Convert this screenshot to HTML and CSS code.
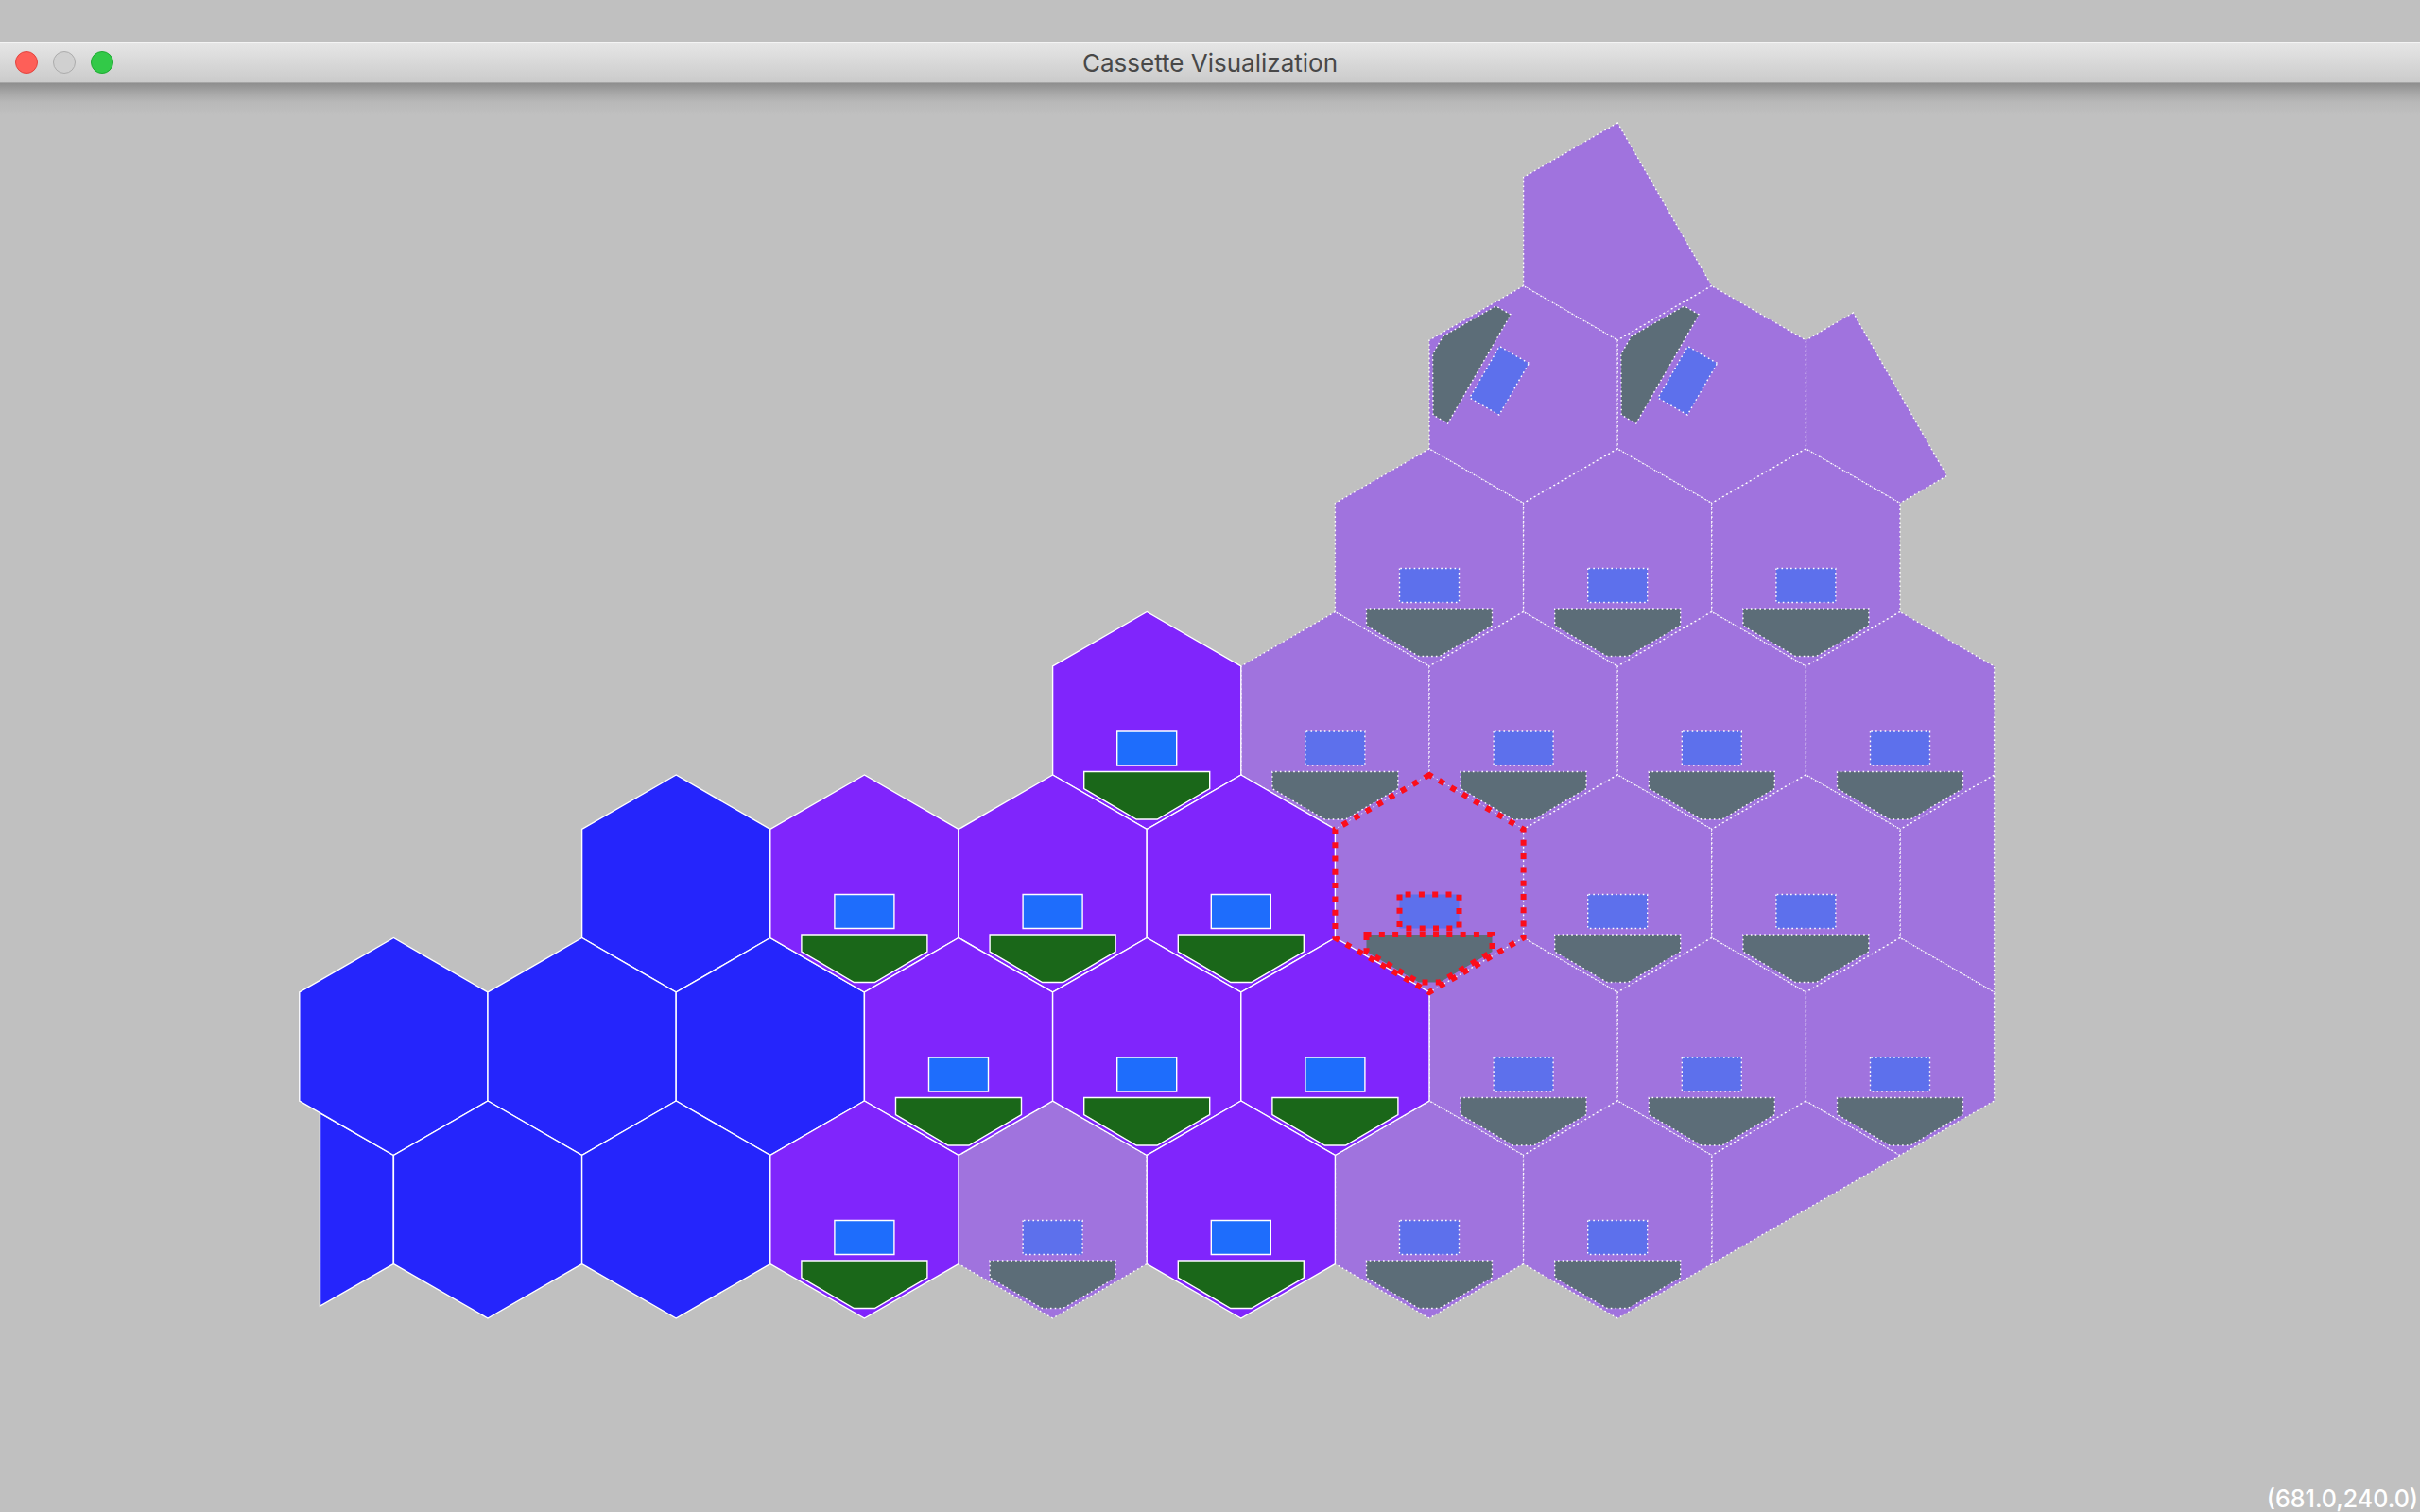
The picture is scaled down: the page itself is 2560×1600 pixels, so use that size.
FILE: index.html
```html
<!DOCTYPE html>
<html lang="en">
<head>
<meta charset="utf-8">
<title>Cassette Visualization</title>
<link rel="stylesheet" href="styles.css">
</head>
<body>
<header class="titlebar">
  <div class="controls">
    <button class="light light-close" type="button" aria-label="Close"></button>
    <button class="light light-minimize" type="button" aria-label="Minimize" disabled></button>
    <button class="light light-zoom" type="button" aria-label="Zoom"></button>
  </div>
  <h1 class="title">Cassette Visualization</h1>
</header>
<main class="stage">
  <svg class="grid" viewBox="0 88 2560 1512" role="img" aria-label="Cassette layout">
    <defs>
      <path id="hex" d="M0-115L-99.6-57.5V57.5L0 115L99.6 57.5V-57.5Z"/>
      <g id="parts">
        <path class="chip" d="M-31.5 11.5V47.5H31.5V11.5Z"/>
        <path class="tray" d="M-66.5 54V72L-11 104.500H11L66.5 72V54Z"/>
      </g>
      <g id="cell"><use href="#hex"/><use href="#parts"/></g>
    </defs>
    <g class="ghost">
      <path d="M1711.200 130L1611.600 187.500V302.500L1711.200 360L1810.800 302.500Z"/>
      <path d="M1960.500 331L1910.400 360V475L2010 532.500L2059.500 503.500Z"/>
      <path d="M2109.600 820L2010 877.500V992.500L2109.600 1050Z"/>
      <path d="M1910.400 1165L1810.800 1222.500V1337.500L2010 1222.500Z"/>
      <g transform="translate(1611.600 417.500)"><use href="#hex"/><use href="#parts" transform="rotate(120)"/></g>
      <g transform="translate(1810.800 417.500)"><use href="#hex"/><use href="#parts" transform="rotate(120)"/></g>
      <use href="#cell" x="1512" y="590"/>
      <use href="#cell" x="1711.200" y="590"/>
      <use href="#cell" x="1910.400" y="590"/>
      <use href="#cell" x="1412.400" y="762.500"/>
      <use href="#cell" x="1611.600" y="762.500"/>
      <use href="#cell" x="1810.800" y="762.500"/>
      <use href="#cell" x="2010" y="762.500"/>
      <use class="bare" href="#cell" x="1512" y="935"/>
      <use href="#cell" x="1711.200" y="935"/>
      <use href="#cell" x="1910.400" y="935"/>
      <use href="#cell" x="1611.600" y="1107.500"/>
      <use href="#cell" x="1810.800" y="1107.500"/>
      <use href="#cell" x="2010" y="1107.500"/>
      <use href="#cell" x="1113.600" y="1280"/>
      <use href="#cell" x="1512" y="1280"/>
      <use href="#cell" x="1711.200" y="1280"/>
    </g>
    <g class="plain">
      <path d="M338.500 1178V1382L416.200 1337.500V1222.500Z"/>
      <use href="#hex" x="715.200" y="935"/>
      <use href="#hex" x="416.400" y="1107.500"/>
      <use href="#hex" x="615.600" y="1107.500"/>
      <use href="#hex" x="814.800" y="1107.500"/>
      <use href="#hex" x="516" y="1280"/>
      <use href="#hex" x="715.200" y="1280"/>
    </g>
    <g class="placed">
      <use href="#cell" x="1213.200" y="762.500"/>
      <use href="#cell" x="914.400" y="935"/>
      <use href="#cell" x="1113.600" y="935"/>
      <use href="#cell" x="1312.800" y="935"/>
      <use href="#cell" x="1014" y="1107.500"/>
      <use href="#cell" x="1213.200" y="1107.500"/>
      <use href="#cell" x="1412.400" y="1107.500"/>
      <use href="#cell" x="914.400" y="1280"/>
      <use href="#cell" x="1312.800" y="1280"/>
    </g>
    <g class="selected"><use href="#cell" x="1512" y="935"/></g>
  </svg>
  <output class="coords">(681.0,240.0)</output>
</main>
</body>
</html>
```
FILE: styles.css
```css
* {
  box-sizing: border-box;
}

body {
  display: flex;
  flex-direction: column;
  min-height: 100vh;
  margin: 0;
  padding-top: 44px;
  background: #c0c0c0;
  font-family: Inter, "Liberation Sans", sans-serif;
}

.titlebar {
  display: grid;
  grid-template-columns: 1fr auto 1fr;
  align-items: center;
  height: 44px;
  padding: 0 16px;
  border-top: 1px solid #f4f4f4;
  border-bottom: 1px solid #a6a6a6;
  background: linear-gradient(#e6e6e6, #cbcbcb);
}

.controls {
  display: flex;
  gap: 16px;
}

.light {
  width: 24px;
  height: 24px;
  padding: 0;
  border: 1px solid;
  border-radius: 50%;
}

.light-close {
  border-color: #e2453f;
  background: #fe5f58;
}

.light-minimize {
  border-color: #acacac;
  background: #d0d0d0;
}

.light-zoom {
  border-color: #1faa33;
  background: #32c948;
}

.title {
  margin: 0;
  padding-top: 2px;
  color: #484848;
  font-size: 26px;
  font-weight: 400;
  line-height: 32px;
}

.stage {
  position: relative;
  flex: 1;
  background: linear-gradient(#8e8e8e, #a6a6a6 10px, #b8b8b8 20px, #c0c0c0 34px);
}

.grid {
  display: block;
  width: 100%;
}

.chip {
  fill: var(--chip);
}

.tray {
  fill: var(--tray);
}

.ghost {
  --chip: #5d70ec;
  --tray: #5c6d78;
  fill: #a073de;
  stroke: #fff;
  stroke-width: 1.4;
  stroke-dasharray: 1.6 3.17;
}

.bare {
  stroke: none;
}

.plain {
  fill: #2525fc;
  stroke: #fff;
  stroke-width: 1.4;
}

.placed {
  --chip: #1e6dfc;
  --tray: #1a6719;
  fill: #8025fc;
  stroke: #fff;
  stroke-width: 1.4;
}

.selected {
  --chip: none;
  --tray: none;
  fill: none;
  stroke: #fc0d1b;
  stroke-width: 6;
  stroke-dasharray: 6 8.3;
}

.coords {
  position: absolute;
  right: 2px;
  bottom: 0;
  color: #fff;
  font-size: 25px;
  font-weight: 500;
  line-height: 28px;
}
```
